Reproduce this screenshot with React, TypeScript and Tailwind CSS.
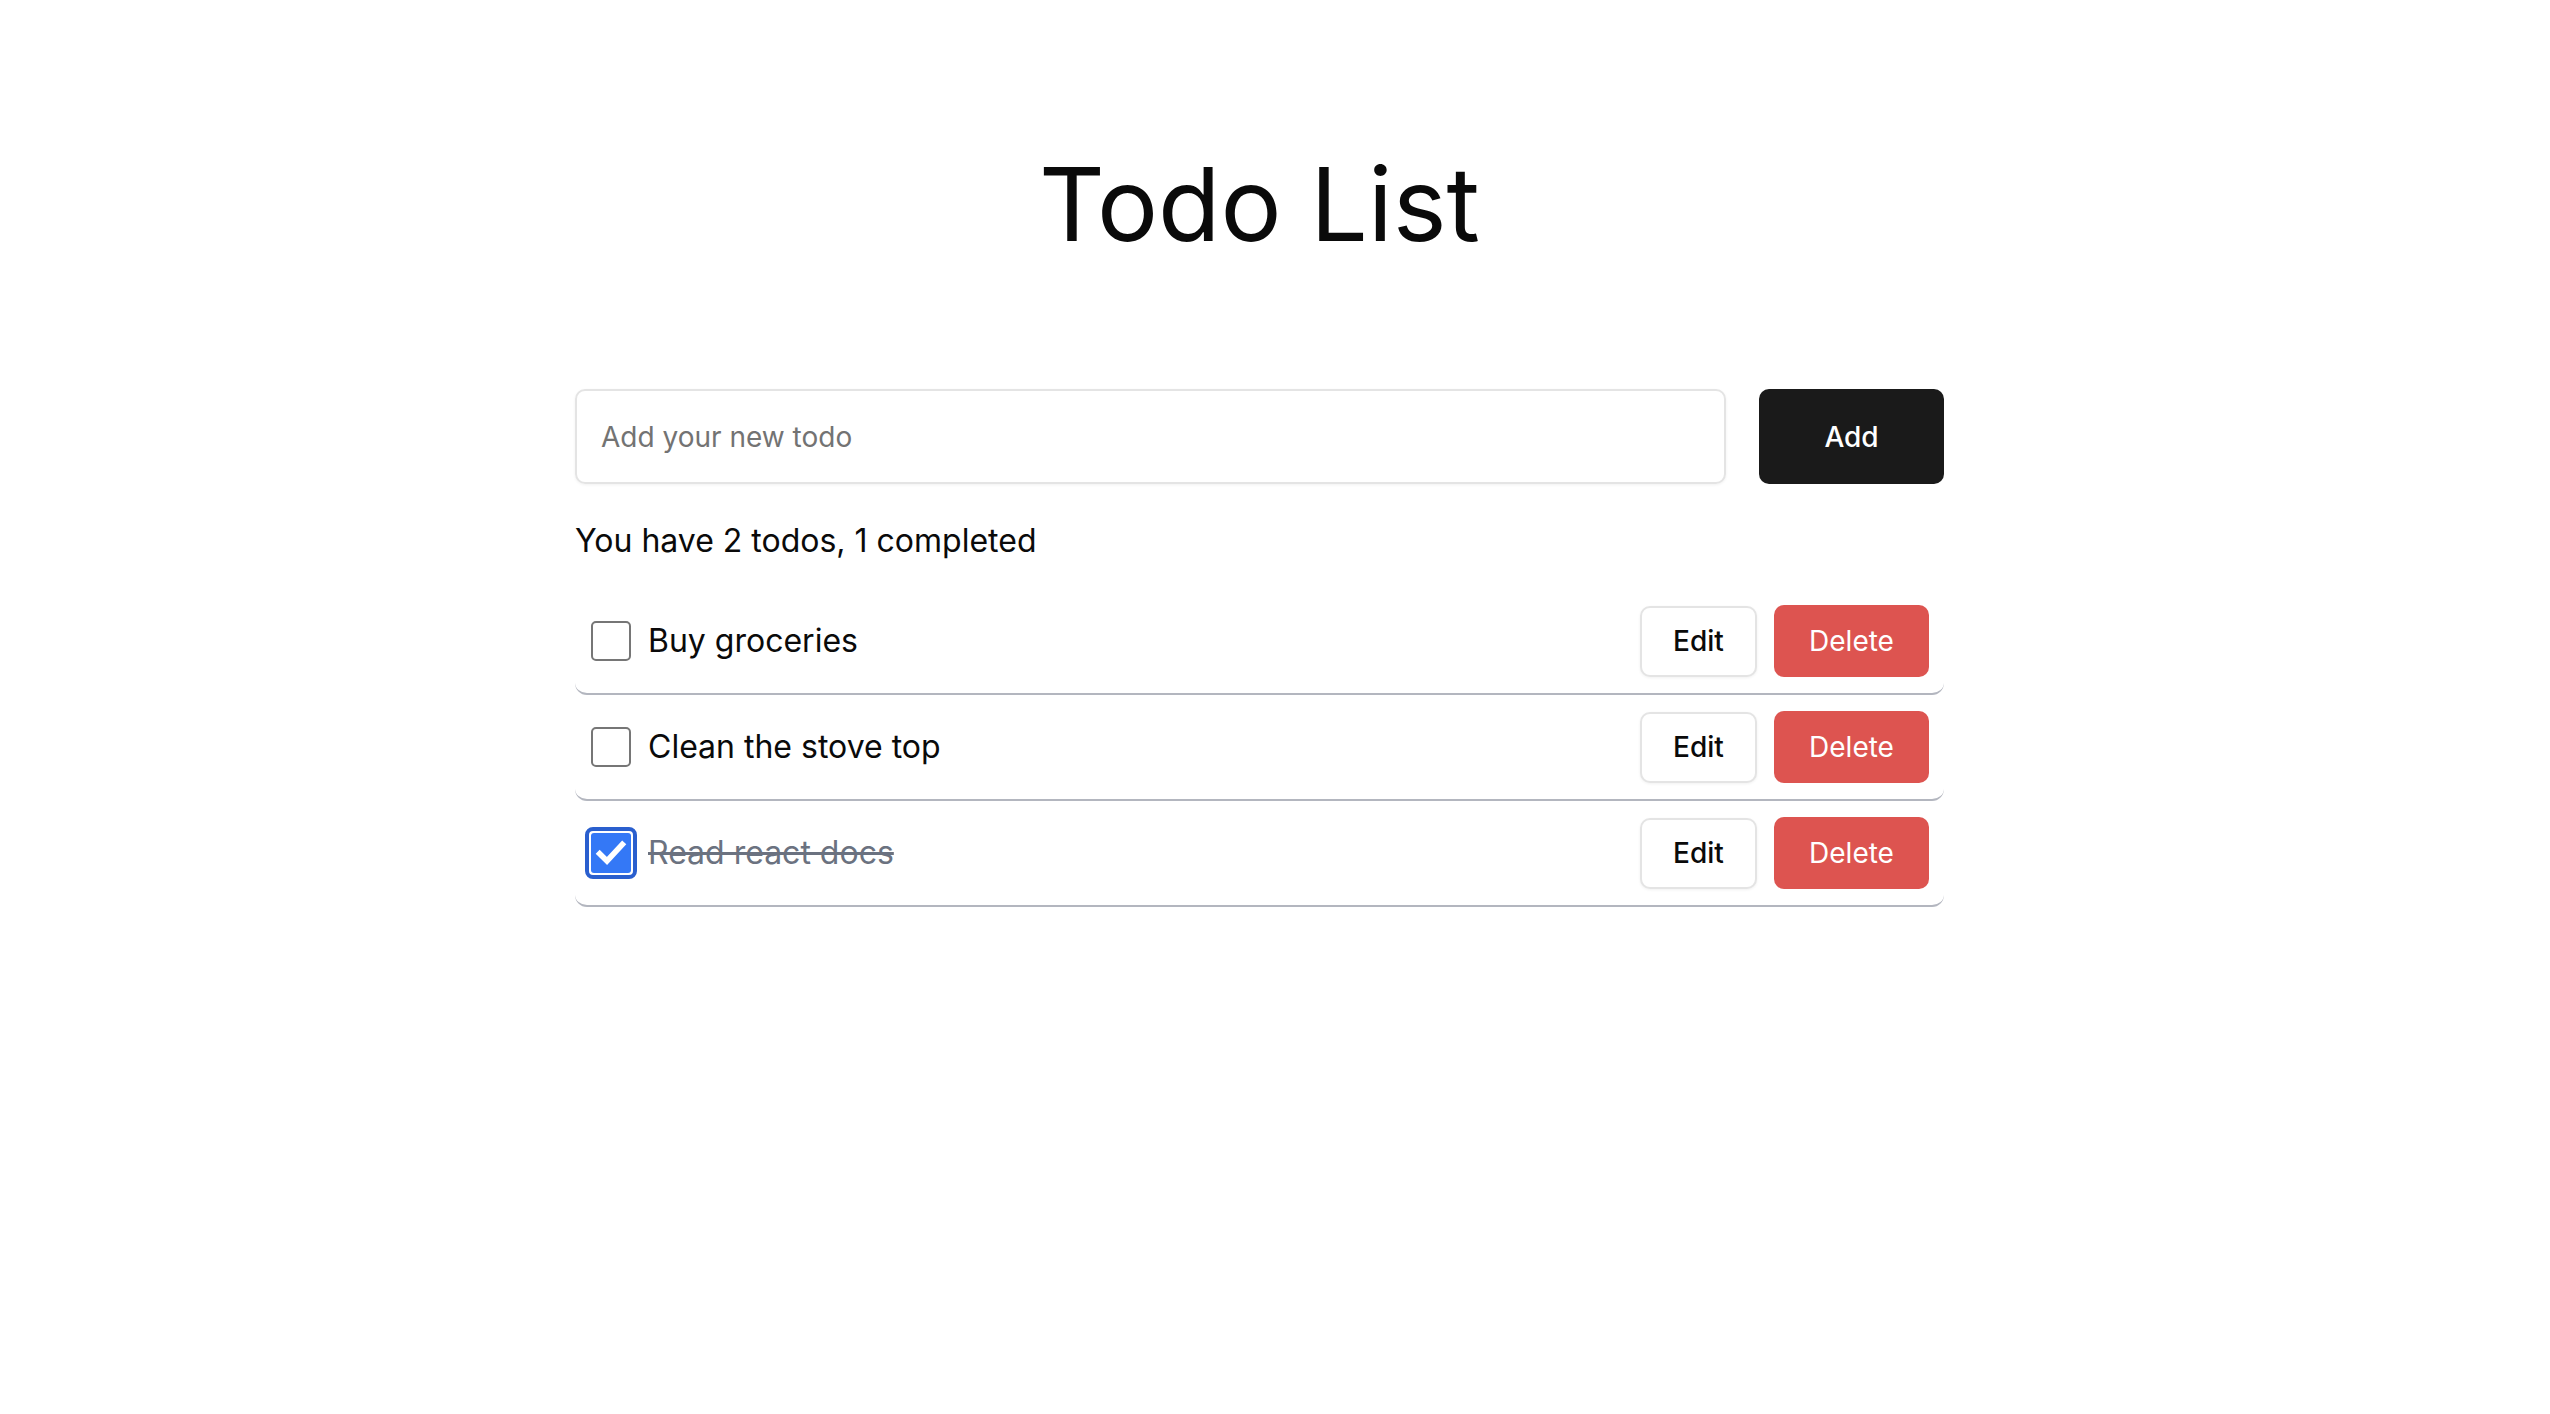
import { useState } from "react";

type Todo = { id: number; text: string; done: boolean };

const initial: Todo[] = [
  { id: 1, text: "Buy groceries", done: false },
  { id: 2, text: "Clean the stove top", done: false },
  { id: 3, text: "Read react docs", done: true },
];

const Check = ({ checked }: { checked: boolean }) =>
  checked ? (
    <span className="flex items-center justify-center w-[52px] h-[52px] -mx-[6px] rounded-[8px] border-[4px] border-[#2a5fce] bg-white p-[2px]">
      <span className="flex items-center justify-center w-full h-full rounded-[3px] bg-[#3478f6]">
        <svg width="32" height="32" viewBox="0 0 24 24" fill="none">
          <path d="M3.5 12.5l5.5 5.5L20.5 5.5" stroke="white" strokeWidth="4.2" strokeLinecap="square" strokeLinejoin="miter" />
        </svg>
      </span>
    </span>
  ) : (
    <span className="block w-[40px] h-[40px] rounded-[5px] border-2 border-[#767676] bg-white" />
  );

export default function App() {
  const [todos, setTodos] = useState(initial);
  const [text, setText] = useState("");
  const completed = todos.filter((t) => t.done).length;

  return (
    <div className="min-h-screen bg-white pr-[31px] font-['Inter',sans-serif] text-[#0a0a0a]">
      <div className="mx-auto w-[1369px] flex flex-col">
        {/* Title */}
        <h1 className="mt-[142px] text-center text-[102px] leading-[124px] font-normal">
          Todo List
        </h1>

        {/* Input row */}
        <div className="mt-[123px] flex gap-[33px]">
          <input
            value={text}
            onChange={(e) => setText(e.target.value)}
            placeholder="Add your new todo"
            className="flex-1 h-[95px] rounded-[10px] border-2 border-[#e4e4e4] px-[24px] text-[28px] shadow-[0_1px_3px_rgba(0,0,0,0.06)] outline-none placeholder:text-[#737373]"
          />
          <button className="w-[185px] h-[95px] rounded-[10px] bg-[#1a1a1a] text-white text-[28px] font-medium">
            Add
          </button>
        </div>

        <p className="mt-[37px] text-[32px] leading-[39px]">
          You have {todos.length - completed} todos, {completed} completed
        </p>

        {/* List */}
        <ul className="mt-[29px] flex flex-col">
          {todos.map((t) => (
            <li
              key={t.id}
              className="flex items-center h-[106px] pl-[16px] pr-[15px] border-b-2 border-[#b3b6bf] rounded-[12px]"
            >
              <button
                onClick={() =>
                  setTodos(todos.map((x) => (x.id === t.id ? { ...x, done: !x.done } : x)))
                }
              >
                <Check checked={t.done} />
              </button>
              <span
                className={`ml-[17px] flex-1 text-[32px] ${
                  t.done ? "line-through text-[#6b7280]" : ""
                }`}
              >
                {t.text}
              </span>
              <button className="w-[117px] h-[71px] rounded-[10px] border-2 border-[#e4e4e4] bg-white text-[28px] font-medium shadow-[0_1px_3px_rgba(0,0,0,0.06)]">
                Edit
              </button>
              <button
                onClick={() => setTodos(todos.filter((x) => x.id !== t.id))}
                className="ml-[17px] w-[155px] h-[72px] rounded-[10px] bg-[#dd5450] text-white text-[28px]"
              >
                Delete
              </button>
            </li>
          ))}
        </ul>
      </div>
    </div>
  );
}
